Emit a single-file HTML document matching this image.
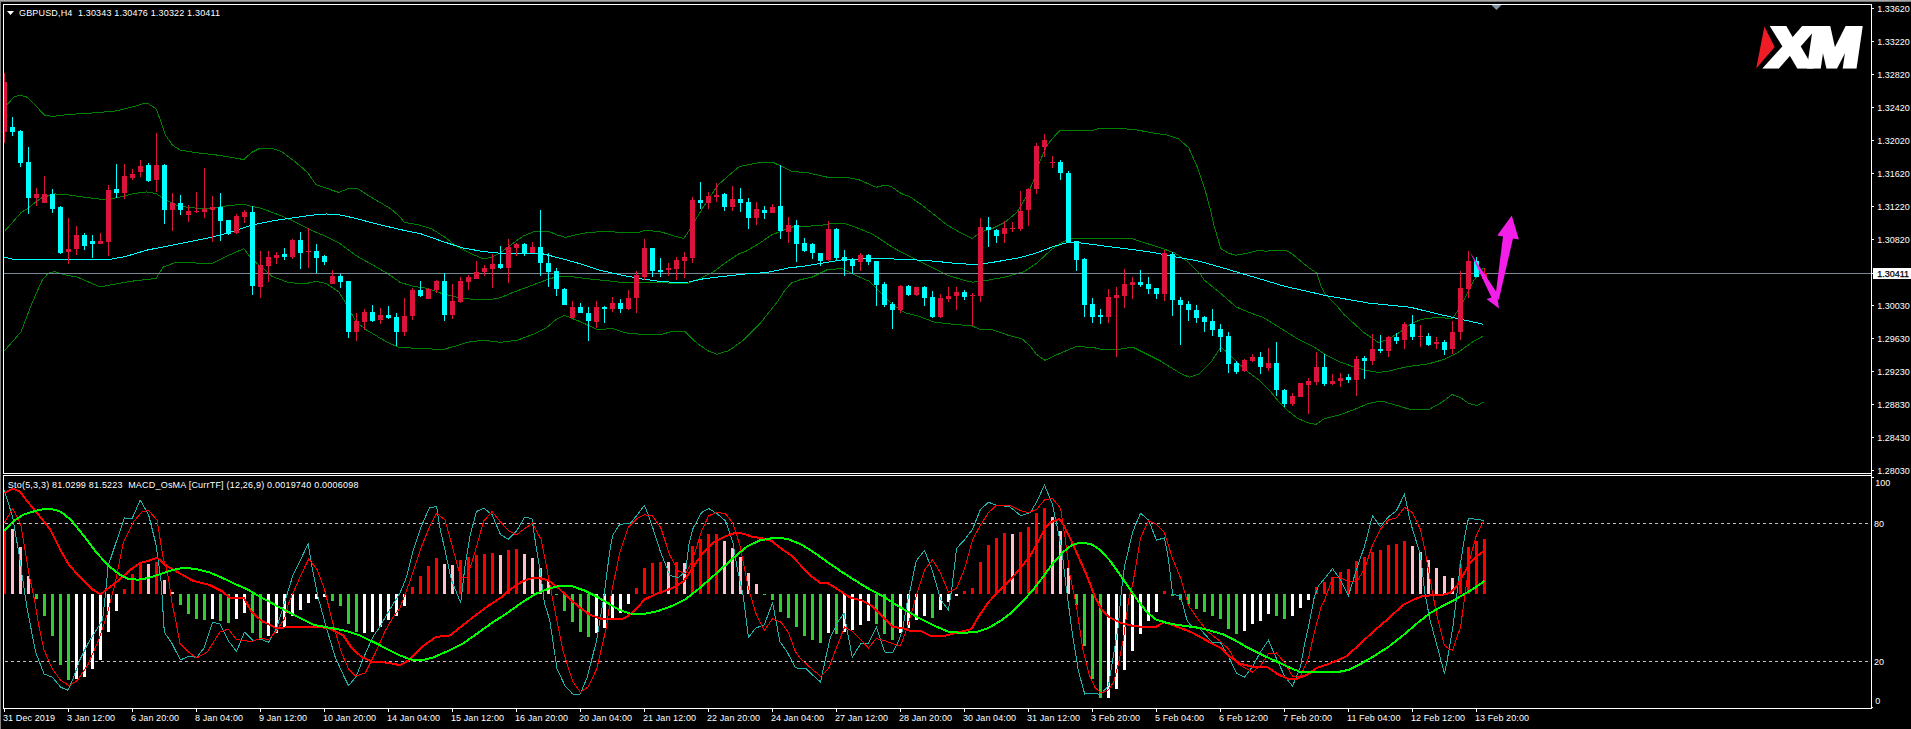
<!DOCTYPE html>
<html><head><meta charset="utf-8"><title>GBPUSD,H4</title>
<style>
html,body{margin:0;padding:0;background:#000}
body{width:1911px;height:729px;overflow:hidden;position:relative}
svg{position:absolute;left:0;top:0;display:block}
text{font-family:"Liberation Sans",sans-serif;font-size:9px;fill:#fff}
</style></head><body>
<svg width="1911" height="729" viewBox="0 0 1911 729">
<rect x="0" y="0" width="1911" height="729" fill="#000"/>
<g fill="none" shape-rendering="crispEdges" stroke-width="1">
<polyline stroke="#008000" points="4.5,108 7.3,104.5 13.6,97.2 20.3,95.1 27.2,97.2 35.6,105.6 44.4,115 52.3,116.5 69,114.4 94.2,112.9 117.2,110.8 134,106.6 142.3,103.9 148.6,103.9 156,108.7 161.2,122.3 165.4,134.9 172.7,145.4 180,150 196.8,152.7 219.8,155.4 243.9,159.6 251.2,152.7 259.5,148.5 272.1,148.5 281.5,151.6 293,160 307.7,172.6 316,184.7 326.5,188.3 339,192.5 348.5,188.3 357.9,188.7 368.4,195.6 381,203 391.4,209.2 400,216.8 404.2,222.3 416.7,224.4 431.4,228.6 446,238 456.5,246.4 471.2,253.7 483.7,259 492.1,256.9 500.5,252.7 513,243.3 523.5,235.9 534,231.7 548.6,231.3 557,234.9 565.4,237.4 575.8,234.9 588.4,232.2 609.3,231.7 626,232.6 637.7,232.7 645,230.2 660.7,231.8 675.4,236.5 683.7,238.4 687.9,232.5 698.4,215 708.8,198.4 718.3,184.8 727.7,176.4 739.2,166.6 750.7,164.3 761.2,162.2 772.7,162.2 782.1,166.6 792.6,171.6 807.2,172.6 828.2,177.4 849.1,177.9 859.5,180 876.3,187.3 884.7,185.2 890.9,186.4 901.4,193.6 909.8,196.7 922.3,205.3 934.9,215.3 947.5,225.3 960.7,232.9 972.2,238.5 981.6,231.6 992.1,228.7 1004.7,222.4 1017.2,212 1027.7,194.2 1034,179.5 1040.2,160.7 1046.5,146 1054.9,135.6 1060.1,130.4 1077.9,130.4 1092.6,130.4 1098.8,128.3 1119.8,128.3 1136.5,129.9 1153.3,133 1167.9,135.2 1178.4,138.7 1188.9,148 1197.2,167 1205.6,192 1211,212 1213.8,225 1218.5,240.7 1220.8,248.5 1227.9,252.9 1235.8,255.3 1246.8,253.3 1259.3,250.1 1265.6,251.4 1273.4,250.1 1285.2,250.1 1292.3,254 1301.7,261.9 1309.5,268.2 1316.6,272.9 1320.5,284.7 1325.2,294.1 1336.2,305.1 1344.1,314.5 1353.5,323.1 1362.9,331.8 1372.3,338.3 1378.8,342.8 1389.3,338.6 1399.8,332.3 1412.3,322.9 1422.8,319.1 1437.5,317.3 1452.1,318.7 1460.5,307.2 1468.8,290.5 1474.1,280 1483.4,268"/>
<polyline stroke="#008000" points="4.5,231.4 21,212.6 28.3,208 35.6,202 41.9,197.7 54.4,193.9 69,195 88,197.7 102.6,199.4 117.2,197.7 134,193.5 146.5,192 156,193.5 165.4,199.8 178,206 194.7,208 211.4,208 226,206 243.9,204 251.2,206.3 261.6,208.4 282.6,216.3 297.2,223 314,231.4 326.5,236.6 339,242.9 355.8,255.5 372.6,264.9 387.2,273.3 400,282.3 412.6,286.2 427.2,288.3 441.9,293.5 458.6,297.7 473.3,299.4 487.9,299.8 500.5,297.7 513,292.4 529.8,286.2 546.5,279.9 559,276 571.6,276.7 588.4,278.8 609.3,280.9 626,283 644.9,282.4 661.6,282 674.2,284 688.9,283 699.3,278.8 714,271.5 726.5,262 739,253.7 746.5,251 759.1,243.4 771.6,235 782.1,230.8 792.6,227 807.2,226.2 819.8,225.6 830.2,223.5 844.9,223.5 859.5,228.7 872.1,234 883.7,241.4 893,247.6 904.7,254 925.6,264.4 946.5,274.9 963.3,280.1 972.7,282.2 988.4,280.1 1005.1,277 1024,271.7 1036.5,263.4 1051.2,249.8 1061.6,242.4 1072.1,238.3 1093,238.7 1114,238.7 1130.7,238.3 1145.4,243 1160,247.7 1174.7,252.9 1187.2,261.3 1200,273.8 1204.1,280 1219.8,292.6 1236.5,307.2 1249.1,312.4 1263.7,317.7 1280.5,328.1 1297.2,338.6 1314,347 1326.5,355.3 1339.1,361.6 1353.7,366.9 1366.3,370.4 1378.8,372.5 1389.3,371 1406,366.9 1429.1,363.7 1443.7,359.5 1458.4,352.2 1473,341.7 1483.5,335.9"/>
<polyline stroke="#008000" points="4.5,350.7 21,331.9 31.4,304.7 41.9,280.6 48.1,273.3 54.4,271.6 67,275.4 77.4,277 90,282.7 100.5,286.9 117.2,283.7 136,280.6 156,278.5 163.3,267 175.8,262.4 192.6,262.8 211.4,263.8 226,256.5 243.9,248.6 251.2,258.6 261.6,267 272.1,276.4 288.9,282.7 305.6,283.7 316,281.2 326.5,283.7 339,292.1 345.4,302.6 355.8,321.4 366.3,329.8 387.2,342.3 400,347.8 420.9,348.2 441.9,349.7 454.4,346.5 467,342.3 483.7,340.2 500.5,342.3 517.2,340.2 534,334 546.5,327.7 554.9,320.4 564.3,315.1 571.6,318.3 582.1,322.4 596.8,329.4 613.5,328.7 626,332.9 642.8,334.4 661.6,334.4 672.1,331.4 684.7,331.4 697.2,343.4 707.7,350.7 717.1,354.3 728.6,350.7 743.3,340.2 760,323.5 776.8,302.6 785.1,290 791.4,283 800,279.8 812.6,277 827.2,269.7 841.9,268.6 852.3,273.8 869.1,281.2 883.7,295.8 892.1,304.2 904.7,312.6 917.2,315.7 934,322 950.7,324 971.6,325.8 980,329.3 992.6,329.9 1009.3,335.6 1021.9,338.7 1030.2,346 1036.5,354.4 1044.9,360.3 1057.5,354.4 1076.3,346.5 1093,347.5 1101.4,349.2 1116,349.8 1132.8,347.1 1145.4,353.4 1160,360.7 1170,367 1180,373 1189.4,377.3 1198.8,374.2 1211.4,361.6 1220.8,347 1230.2,355.3 1236.5,361.6 1247,371 1259.5,380.5 1270,390.9 1278.4,401.4 1286.7,409.8 1297.2,418.1 1307.7,422.8 1316,424.4 1324.4,418.6 1339.1,415 1353.7,409.8 1368.4,403.5 1381,401 1393.5,404.5 1410.2,409.4 1429.1,409.4 1441.6,402.4 1452.1,394.5 1460.5,397.6 1468.8,403.5 1477.2,405.6 1483.5,402.4"/>
</g>
<rect x="4" y="273" width="1867" height="1" fill="#778899" shape-rendering="crispEdges"/>
<polyline fill="none" shape-rendering="crispEdges" stroke="#00FFFF" stroke-width="1" points="4.5,257.1 12.6,259.2 52.3,259.2 111,259.2 125.6,256.5 146.5,250.2 178,244 209.3,237.7 230.2,232.4 251.2,225.1 272.1,220.9 293,217.8 314,215 326.5,214 339,214.7 355.8,218.4 376.8,224 400,229.5 420.9,233.8 441.9,241.2 462.8,248 483.7,251.6 504.7,253.7 525.6,253.7 542.3,253.7 559,257.9 577.9,263.1 598.8,270 619.8,274.7 640.7,278.8 661.6,281.6 676.3,282.4 688.9,282 703.5,278.8 724.4,276.3 745.4,274 766.3,272.6 776.8,270.5 791.4,267.3 800,266.8 820.9,263.4 841.9,259.8 871.2,258.6 904.7,259.2 936,261.3 959,263.8 980,264.4 998.8,261.3 1019.8,257.7 1036.5,252.9 1053.3,246.6 1063.7,243.5 1072.1,242 1093,244.5 1114,247.3 1134.9,249.8 1155.8,252.9 1176.8,257.1 1200,261.3 1230,270 1263.7,280 1284.7,286.3 1326.5,295.7 1368.4,303 1410.2,307.2 1431.2,312.4 1452.1,317.3 1473,321.9 1483.5,324.4"/>
<g shape-rendering="crispEdges">
<rect x="4" y="73" width="1" height="70" fill="#DC143C"/><rect x="2" y="82" width="5" height="50" fill="#DC143C"/>
<rect x="12" y="117" width="1" height="19" fill="#00FFFF"/><rect x="10" y="127" width="5" height="5" fill="#00FFFF"/>
<rect x="20" y="130" width="1" height="37" fill="#00FFFF"/><rect x="18" y="131" width="5" height="32" fill="#00FFFF"/>
<rect x="28" y="147" width="1" height="67" fill="#00FFFF"/><rect x="26" y="162" width="5" height="36" fill="#00FFFF"/>
<rect x="36" y="188" width="1" height="18" fill="#DC143C"/><rect x="34" y="194" width="5" height="4" fill="#DC143C"/>
<rect x="44" y="176" width="1" height="27" fill="#DC143C"/><rect x="42" y="194" width="5" height="9" fill="#DC143C"/>
<rect x="52" y="189" width="1" height="24" fill="#00FFFF"/><rect x="50" y="194" width="5" height="15" fill="#00FFFF"/>
<rect x="60" y="206" width="1" height="48" fill="#00FFFF"/><rect x="58" y="207" width="5" height="46" fill="#00FFFF"/>
<rect x="68" y="218" width="1" height="46" fill="#DC143C"/><rect x="66" y="249" width="5" height="3" fill="#DC143C"/>
<rect x="76" y="226" width="1" height="29" fill="#DC143C"/><rect x="74" y="235" width="5" height="14" fill="#DC143C"/>
<rect x="84" y="233" width="1" height="17" fill="#00FFFF"/><rect x="82" y="235" width="5" height="11" fill="#00FFFF"/>
<rect x="92" y="235" width="1" height="23" fill="#00FFFF"/><rect x="90" y="241" width="5" height="3" fill="#00FFFF"/>
<rect x="100" y="233" width="1" height="11" fill="#DC143C"/><rect x="98" y="241" width="5" height="3" fill="#DC143C"/>
<rect x="108" y="185" width="1" height="71" fill="#DC143C"/><rect x="106" y="190" width="5" height="52" fill="#DC143C"/>
<rect x="116" y="164" width="1" height="34" fill="#00FFFF"/><rect x="114" y="189" width="5" height="4" fill="#00FFFF"/>
<rect x="124" y="164" width="1" height="35" fill="#DC143C"/><rect x="122" y="176" width="5" height="17" fill="#DC143C"/>
<rect x="132" y="169" width="1" height="11" fill="#DC143C"/><rect x="130" y="174" width="5" height="4" fill="#DC143C"/>
<rect x="140" y="160" width="1" height="17" fill="#DC143C"/><rect x="138" y="166" width="5" height="6" fill="#DC143C"/>
<rect x="148" y="163" width="1" height="19" fill="#00FFFF"/><rect x="146" y="165" width="5" height="16" fill="#00FFFF"/>
<rect x="156" y="133" width="1" height="59" fill="#DC143C"/><rect x="154" y="165" width="5" height="15" fill="#DC143C"/>
<rect x="164" y="164" width="1" height="60" fill="#00FFFF"/><rect x="162" y="165" width="5" height="45" fill="#00FFFF"/>
<rect x="172" y="193" width="1" height="38" fill="#DC143C"/><rect x="170" y="203" width="5" height="7" fill="#DC143C"/>
<rect x="180" y="195" width="1" height="20" fill="#00FFFF"/><rect x="178" y="203" width="5" height="7" fill="#00FFFF"/>
<rect x="188" y="205" width="1" height="17" fill="#DC143C"/><rect x="186" y="211" width="5" height="4" fill="#DC143C"/>
<rect x="196" y="192" width="1" height="21" fill="#DC143C"/><rect x="194" y="211" width="5" height="1" fill="#DC143C"/>
<rect x="204" y="168" width="1" height="50" fill="#DC143C"/><rect x="202" y="209" width="5" height="3" fill="#DC143C"/>
<rect x="212" y="196" width="1" height="46" fill="#DC143C"/><rect x="210" y="207" width="5" height="3" fill="#DC143C"/>
<rect x="220" y="193" width="1" height="48" fill="#00FFFF"/><rect x="218" y="207" width="5" height="14" fill="#00FFFF"/>
<rect x="228" y="220" width="1" height="15" fill="#00FFFF"/><rect x="226" y="220" width="5" height="14" fill="#00FFFF"/>
<rect x="236" y="214" width="1" height="20" fill="#DC143C"/><rect x="234" y="216" width="5" height="17" fill="#DC143C"/>
<rect x="244" y="210" width="1" height="13" fill="#DC143C"/><rect x="242" y="212" width="5" height="5" fill="#DC143C"/>
<rect x="252" y="206" width="1" height="89" fill="#00FFFF"/><rect x="250" y="212" width="5" height="74" fill="#00FFFF"/>
<rect x="260" y="251" width="1" height="47" fill="#DC143C"/><rect x="258" y="265" width="5" height="22" fill="#DC143C"/>
<rect x="268" y="251" width="1" height="31" fill="#DC143C"/><rect x="266" y="257" width="5" height="9" fill="#DC143C"/>
<rect x="276" y="252" width="1" height="12" fill="#DC143C"/><rect x="274" y="255" width="5" height="3" fill="#DC143C"/>
<rect x="284" y="248" width="1" height="12" fill="#00FFFF"/><rect x="282" y="254" width="5" height="3" fill="#00FFFF"/>
<rect x="292" y="239" width="1" height="20" fill="#DC143C"/><rect x="290" y="240" width="5" height="17" fill="#DC143C"/>
<rect x="300" y="232" width="1" height="37" fill="#00FFFF"/><rect x="298" y="240" width="5" height="13" fill="#00FFFF"/>
<rect x="308" y="228" width="1" height="40" fill="#DC143C"/><rect x="306" y="251" width="5" height="1" fill="#DC143C"/>
<rect x="316" y="244" width="1" height="29" fill="#00FFFF"/><rect x="314" y="251" width="5" height="7" fill="#00FFFF"/>
<rect x="324" y="255" width="1" height="10" fill="#00FFFF"/><rect x="322" y="256" width="5" height="6" fill="#00FFFF"/>
<rect x="332" y="270" width="1" height="14" fill="#DC143C"/><rect x="330" y="276" width="5" height="8" fill="#DC143C"/>
<rect x="340" y="274" width="1" height="14" fill="#00FFFF"/><rect x="338" y="276" width="5" height="6" fill="#00FFFF"/>
<rect x="348" y="281" width="1" height="57" fill="#00FFFF"/><rect x="346" y="281" width="5" height="51" fill="#00FFFF"/>
<rect x="356" y="313" width="1" height="28" fill="#DC143C"/><rect x="354" y="321" width="5" height="11" fill="#DC143C"/>
<rect x="364" y="309" width="1" height="21" fill="#DC143C"/><rect x="362" y="312" width="5" height="10" fill="#DC143C"/>
<rect x="372" y="305" width="1" height="17" fill="#00FFFF"/><rect x="370" y="312" width="5" height="9" fill="#00FFFF"/>
<rect x="380" y="308" width="1" height="16" fill="#DC143C"/><rect x="378" y="315" width="5" height="5" fill="#DC143C"/>
<rect x="388" y="306" width="1" height="13" fill="#00FFFF"/><rect x="386" y="315" width="5" height="3" fill="#00FFFF"/>
<rect x="396" y="313" width="1" height="33" fill="#00FFFF"/><rect x="394" y="317" width="5" height="15" fill="#00FFFF"/>
<rect x="404" y="298" width="1" height="38" fill="#DC143C"/><rect x="402" y="316" width="5" height="16" fill="#DC143C"/>
<rect x="412" y="288" width="1" height="32" fill="#DC143C"/><rect x="410" y="290" width="5" height="26" fill="#DC143C"/>
<rect x="420" y="281" width="1" height="16" fill="#00FFFF"/><rect x="418" y="290" width="5" height="6" fill="#00FFFF"/>
<rect x="428" y="288" width="1" height="11" fill="#DC143C"/><rect x="426" y="289" width="5" height="10" fill="#DC143C"/>
<rect x="436" y="280" width="1" height="13" fill="#DC143C"/><rect x="434" y="281" width="5" height="9" fill="#DC143C"/>
<rect x="444" y="273" width="1" height="48" fill="#00FFFF"/><rect x="442" y="281" width="5" height="34" fill="#00FFFF"/>
<rect x="452" y="284" width="1" height="35" fill="#DC143C"/><rect x="450" y="301" width="5" height="14" fill="#DC143C"/>
<rect x="460" y="277" width="1" height="26" fill="#DC143C"/><rect x="458" y="281" width="5" height="21" fill="#DC143C"/>
<rect x="468" y="275" width="1" height="15" fill="#DC143C"/><rect x="466" y="277" width="5" height="5" fill="#DC143C"/>
<rect x="476" y="261" width="1" height="18" fill="#DC143C"/><rect x="474" y="272" width="5" height="7" fill="#DC143C"/>
<rect x="484" y="265" width="1" height="11" fill="#DC143C"/><rect x="482" y="268" width="5" height="4" fill="#DC143C"/>
<rect x="492" y="254" width="1" height="34" fill="#DC143C"/><rect x="490" y="264" width="5" height="5" fill="#DC143C"/>
<rect x="500" y="246" width="1" height="23" fill="#00FFFF"/><rect x="498" y="264" width="5" height="4" fill="#00FFFF"/>
<rect x="508" y="239" width="1" height="44" fill="#DC143C"/><rect x="506" y="247" width="5" height="21" fill="#DC143C"/>
<rect x="516" y="243" width="1" height="13" fill="#DC143C"/><rect x="514" y="244" width="5" height="4" fill="#DC143C"/>
<rect x="524" y="243" width="1" height="13" fill="#00FFFF"/><rect x="522" y="244" width="5" height="9" fill="#00FFFF"/>
<rect x="532" y="242" width="1" height="11" fill="#DC143C"/><rect x="530" y="247" width="5" height="6" fill="#DC143C"/>
<rect x="540" y="210" width="1" height="66" fill="#00FFFF"/><rect x="538" y="247" width="5" height="16" fill="#00FFFF"/>
<rect x="548" y="253" width="1" height="34" fill="#00FFFF"/><rect x="546" y="263" width="5" height="9" fill="#00FFFF"/>
<rect x="556" y="268" width="1" height="28" fill="#00FFFF"/><rect x="554" y="271" width="5" height="18" fill="#00FFFF"/>
<rect x="564" y="288" width="1" height="17" fill="#00FFFF"/><rect x="562" y="289" width="5" height="16" fill="#00FFFF"/>
<rect x="572" y="301" width="1" height="17" fill="#DC143C"/><rect x="570" y="307" width="5" height="11" fill="#DC143C"/>
<rect x="580" y="303" width="1" height="10" fill="#00FFFF"/><rect x="578" y="307" width="5" height="6" fill="#00FFFF"/>
<rect x="588" y="307" width="1" height="34" fill="#00FFFF"/><rect x="586" y="313" width="5" height="8" fill="#00FFFF"/>
<rect x="596" y="301" width="1" height="27" fill="#DC143C"/><rect x="594" y="307" width="5" height="15" fill="#DC143C"/>
<rect x="604" y="306" width="1" height="17" fill="#00FFFF"/><rect x="602" y="307" width="5" height="2" fill="#00FFFF"/>
<rect x="612" y="297" width="1" height="15" fill="#DC143C"/><rect x="610" y="303" width="5" height="6" fill="#DC143C"/>
<rect x="620" y="299" width="1" height="14" fill="#00FFFF"/><rect x="618" y="303" width="5" height="6" fill="#00FFFF"/>
<rect x="628" y="290" width="1" height="20" fill="#DC143C"/><rect x="626" y="298" width="5" height="11" fill="#DC143C"/>
<rect x="636" y="271" width="1" height="42" fill="#DC143C"/><rect x="634" y="275" width="5" height="23" fill="#DC143C"/>
<rect x="644" y="239" width="1" height="41" fill="#DC143C"/><rect x="642" y="248" width="5" height="29" fill="#DC143C"/>
<rect x="652" y="248" width="1" height="29" fill="#00FFFF"/><rect x="650" y="248" width="5" height="23" fill="#00FFFF"/>
<rect x="660" y="258" width="1" height="19" fill="#00FFFF"/><rect x="658" y="270" width="5" height="2" fill="#00FFFF"/>
<rect x="668" y="263" width="1" height="13" fill="#DC143C"/><rect x="666" y="268" width="5" height="2" fill="#DC143C"/>
<rect x="676" y="257" width="1" height="23" fill="#DC143C"/><rect x="674" y="260" width="5" height="9" fill="#DC143C"/>
<rect x="684" y="252" width="1" height="26" fill="#DC143C"/><rect x="682" y="257" width="5" height="4" fill="#DC143C"/>
<rect x="692" y="197" width="1" height="66" fill="#DC143C"/><rect x="690" y="200" width="5" height="58" fill="#DC143C"/>
<rect x="700" y="182" width="1" height="27" fill="#00FFFF"/><rect x="698" y="200" width="5" height="3" fill="#00FFFF"/>
<rect x="708" y="192" width="1" height="17" fill="#DC143C"/><rect x="706" y="196" width="5" height="7" fill="#DC143C"/>
<rect x="716" y="183" width="1" height="19" fill="#DC143C"/><rect x="714" y="195" width="5" height="2" fill="#DC143C"/>
<rect x="724" y="193" width="1" height="18" fill="#00FFFF"/><rect x="722" y="194" width="5" height="13" fill="#00FFFF"/>
<rect x="732" y="186" width="1" height="25" fill="#DC143C"/><rect x="730" y="199" width="5" height="8" fill="#DC143C"/>
<rect x="740" y="188" width="1" height="24" fill="#00FFFF"/><rect x="738" y="199" width="5" height="4" fill="#00FFFF"/>
<rect x="748" y="198" width="1" height="31" fill="#00FFFF"/><rect x="746" y="202" width="5" height="16" fill="#00FFFF"/>
<rect x="756" y="202" width="1" height="23" fill="#DC143C"/><rect x="754" y="209" width="5" height="9" fill="#DC143C"/>
<rect x="764" y="206" width="1" height="13" fill="#00FFFF"/><rect x="762" y="210" width="5" height="3" fill="#00FFFF"/>
<rect x="772" y="204" width="1" height="9" fill="#DC143C"/><rect x="770" y="207" width="5" height="6" fill="#DC143C"/>
<rect x="780" y="165" width="1" height="74" fill="#00FFFF"/><rect x="778" y="206" width="5" height="25" fill="#00FFFF"/>
<rect x="788" y="217" width="1" height="26" fill="#DC143C"/><rect x="786" y="225" width="5" height="7" fill="#DC143C"/>
<rect x="796" y="220" width="1" height="42" fill="#00FFFF"/><rect x="794" y="225" width="5" height="19" fill="#00FFFF"/>
<rect x="804" y="238" width="1" height="14" fill="#00FFFF"/><rect x="802" y="243" width="5" height="8" fill="#00FFFF"/>
<rect x="812" y="243" width="1" height="16" fill="#00FFFF"/><rect x="810" y="244" width="5" height="9" fill="#00FFFF"/>
<rect x="820" y="253" width="1" height="13" fill="#00FFFF"/><rect x="818" y="253" width="5" height="8" fill="#00FFFF"/>
<rect x="828" y="221" width="1" height="40" fill="#DC143C"/><rect x="826" y="229" width="5" height="31" fill="#DC143C"/>
<rect x="836" y="228" width="1" height="33" fill="#00FFFF"/><rect x="834" y="229" width="5" height="29" fill="#00FFFF"/>
<rect x="844" y="250" width="1" height="26" fill="#00FFFF"/><rect x="842" y="257" width="5" height="4" fill="#00FFFF"/>
<rect x="852" y="258" width="1" height="16" fill="#00FFFF"/><rect x="850" y="259" width="5" height="7" fill="#00FFFF"/>
<rect x="860" y="253" width="1" height="18" fill="#DC143C"/><rect x="858" y="255" width="5" height="7" fill="#DC143C"/>
<rect x="868" y="254" width="1" height="11" fill="#00FFFF"/><rect x="866" y="255" width="5" height="7" fill="#00FFFF"/>
<rect x="876" y="261" width="1" height="45" fill="#00FFFF"/><rect x="874" y="261" width="5" height="24" fill="#00FFFF"/>
<rect x="884" y="282" width="1" height="25" fill="#00FFFF"/><rect x="882" y="284" width="5" height="21" fill="#00FFFF"/>
<rect x="892" y="302" width="1" height="27" fill="#00FFFF"/><rect x="890" y="304" width="5" height="6" fill="#00FFFF"/>
<rect x="900" y="285" width="1" height="28" fill="#DC143C"/><rect x="898" y="286" width="5" height="24" fill="#DC143C"/>
<rect x="908" y="285" width="1" height="11" fill="#00FFFF"/><rect x="906" y="286" width="5" height="9" fill="#00FFFF"/>
<rect x="916" y="287" width="1" height="9" fill="#DC143C"/><rect x="914" y="287" width="5" height="8" fill="#DC143C"/>
<rect x="924" y="286" width="1" height="20" fill="#00FFFF"/><rect x="922" y="287" width="5" height="11" fill="#00FFFF"/>
<rect x="932" y="291" width="1" height="27" fill="#00FFFF"/><rect x="930" y="297" width="5" height="20" fill="#00FFFF"/>
<rect x="940" y="294" width="1" height="24" fill="#DC143C"/><rect x="938" y="298" width="5" height="19" fill="#DC143C"/>
<rect x="948" y="287" width="1" height="15" fill="#DC143C"/><rect x="946" y="296" width="5" height="3" fill="#DC143C"/>
<rect x="956" y="287" width="1" height="23" fill="#DC143C"/><rect x="954" y="292" width="5" height="4" fill="#DC143C"/>
<rect x="964" y="290" width="1" height="10" fill="#00FFFF"/><rect x="962" y="292" width="5" height="5" fill="#00FFFF"/>
<rect x="972" y="293" width="1" height="33" fill="#DC143C"/><rect x="970" y="295" width="5" height="1" fill="#DC143C"/>
<rect x="980" y="218" width="1" height="84" fill="#DC143C"/><rect x="978" y="227" width="5" height="69" fill="#DC143C"/>
<rect x="988" y="217" width="1" height="30" fill="#00FFFF"/><rect x="986" y="227" width="5" height="3" fill="#00FFFF"/>
<rect x="996" y="229" width="1" height="14" fill="#00FFFF"/><rect x="994" y="230" width="5" height="6" fill="#00FFFF"/>
<rect x="1004" y="221" width="1" height="22" fill="#DC143C"/><rect x="1002" y="228" width="5" height="6" fill="#DC143C"/>
<rect x="1012" y="222" width="1" height="10" fill="#DC143C"/><rect x="1010" y="228" width="5" height="1" fill="#DC143C"/>
<rect x="1020" y="191" width="1" height="40" fill="#DC143C"/><rect x="1018" y="211" width="5" height="18" fill="#DC143C"/>
<rect x="1028" y="188" width="1" height="38" fill="#DC143C"/><rect x="1026" y="189" width="5" height="21" fill="#DC143C"/>
<rect x="1036" y="143" width="1" height="51" fill="#DC143C"/><rect x="1034" y="146" width="5" height="43" fill="#DC143C"/>
<rect x="1044" y="134" width="1" height="23" fill="#DC143C"/><rect x="1042" y="140" width="5" height="7" fill="#DC143C"/>
<rect x="1052" y="156" width="1" height="12" fill="#DC143C"/><rect x="1050" y="162" width="5" height="1" fill="#DC143C"/>
<rect x="1060" y="160" width="1" height="20" fill="#00FFFF"/><rect x="1058" y="162" width="5" height="11" fill="#00FFFF"/>
<rect x="1068" y="171" width="1" height="72" fill="#00FFFF"/><rect x="1066" y="173" width="5" height="69" fill="#00FFFF"/>
<rect x="1076" y="241" width="1" height="30" fill="#00FFFF"/><rect x="1074" y="241" width="5" height="19" fill="#00FFFF"/>
<rect x="1084" y="258" width="1" height="59" fill="#00FFFF"/><rect x="1082" y="259" width="5" height="46" fill="#00FFFF"/>
<rect x="1092" y="298" width="1" height="25" fill="#00FFFF"/><rect x="1090" y="304" width="5" height="13" fill="#00FFFF"/>
<rect x="1100" y="309" width="1" height="15" fill="#00FFFF"/><rect x="1098" y="315" width="5" height="2" fill="#00FFFF"/>
<rect x="1108" y="289" width="1" height="34" fill="#DC143C"/><rect x="1106" y="297" width="5" height="20" fill="#DC143C"/>
<rect x="1116" y="287" width="1" height="70" fill="#DC143C"/><rect x="1114" y="295" width="5" height="3" fill="#DC143C"/>
<rect x="1124" y="269" width="1" height="39" fill="#DC143C"/><rect x="1122" y="284" width="5" height="12" fill="#DC143C"/>
<rect x="1132" y="277" width="1" height="22" fill="#DC143C"/><rect x="1130" y="282" width="5" height="3" fill="#DC143C"/>
<rect x="1140" y="270" width="1" height="17" fill="#00FFFF"/><rect x="1138" y="282" width="5" height="3" fill="#00FFFF"/>
<rect x="1148" y="277" width="1" height="17" fill="#00FFFF"/><rect x="1146" y="284" width="5" height="5" fill="#00FFFF"/>
<rect x="1156" y="288" width="1" height="11" fill="#00FFFF"/><rect x="1154" y="288" width="5" height="6" fill="#00FFFF"/>
<rect x="1164" y="250" width="1" height="51" fill="#DC143C"/><rect x="1162" y="253" width="5" height="41" fill="#DC143C"/>
<rect x="1172" y="252" width="1" height="64" fill="#00FFFF"/><rect x="1170" y="254" width="5" height="46" fill="#00FFFF"/>
<rect x="1180" y="297" width="1" height="48" fill="#00FFFF"/><rect x="1178" y="300" width="5" height="5" fill="#00FFFF"/>
<rect x="1188" y="301" width="1" height="20" fill="#00FFFF"/><rect x="1186" y="304" width="5" height="6" fill="#00FFFF"/>
<rect x="1196" y="305" width="1" height="18" fill="#00FFFF"/><rect x="1194" y="310" width="5" height="8" fill="#00FFFF"/>
<rect x="1204" y="316" width="1" height="16" fill="#00FFFF"/><rect x="1202" y="317" width="5" height="5" fill="#00FFFF"/>
<rect x="1212" y="309" width="1" height="27" fill="#00FFFF"/><rect x="1210" y="321" width="5" height="9" fill="#00FFFF"/>
<rect x="1220" y="324" width="1" height="28" fill="#00FFFF"/><rect x="1218" y="329" width="5" height="8" fill="#00FFFF"/>
<rect x="1228" y="332" width="1" height="41" fill="#00FFFF"/><rect x="1226" y="336" width="5" height="28" fill="#00FFFF"/>
<rect x="1236" y="361" width="1" height="13" fill="#00FFFF"/><rect x="1234" y="363" width="5" height="9" fill="#00FFFF"/>
<rect x="1244" y="359" width="1" height="13" fill="#DC143C"/><rect x="1242" y="360" width="5" height="11" fill="#DC143C"/>
<rect x="1252" y="354" width="1" height="8" fill="#DC143C"/><rect x="1250" y="357" width="5" height="4" fill="#DC143C"/>
<rect x="1260" y="352" width="1" height="22" fill="#00FFFF"/><rect x="1258" y="357" width="5" height="10" fill="#00FFFF"/>
<rect x="1268" y="348" width="1" height="23" fill="#DC143C"/><rect x="1266" y="363" width="5" height="5" fill="#DC143C"/>
<rect x="1276" y="342" width="1" height="54" fill="#00FFFF"/><rect x="1274" y="363" width="5" height="27" fill="#00FFFF"/>
<rect x="1284" y="389" width="1" height="18" fill="#00FFFF"/><rect x="1282" y="390" width="5" height="14" fill="#00FFFF"/>
<rect x="1292" y="393" width="1" height="13" fill="#DC143C"/><rect x="1290" y="396" width="5" height="8" fill="#DC143C"/>
<rect x="1300" y="383" width="1" height="14" fill="#DC143C"/><rect x="1298" y="383" width="5" height="14" fill="#DC143C"/>
<rect x="1308" y="378" width="1" height="36" fill="#DC143C"/><rect x="1306" y="381" width="5" height="4" fill="#DC143C"/>
<rect x="1316" y="352" width="1" height="33" fill="#DC143C"/><rect x="1314" y="367" width="5" height="15" fill="#DC143C"/>
<rect x="1324" y="354" width="1" height="32" fill="#00FFFF"/><rect x="1322" y="367" width="5" height="17" fill="#00FFFF"/>
<rect x="1332" y="374" width="1" height="11" fill="#DC143C"/><rect x="1330" y="381" width="5" height="3" fill="#DC143C"/>
<rect x="1340" y="373" width="1" height="14" fill="#DC143C"/><rect x="1338" y="378" width="5" height="3" fill="#DC143C"/>
<rect x="1348" y="374" width="1" height="9" fill="#00FFFF"/><rect x="1346" y="377" width="5" height="3" fill="#00FFFF"/>
<rect x="1356" y="356" width="1" height="40" fill="#DC143C"/><rect x="1354" y="359" width="5" height="21" fill="#DC143C"/>
<rect x="1364" y="356" width="1" height="23" fill="#00FFFF"/><rect x="1362" y="358" width="5" height="3" fill="#00FFFF"/>
<rect x="1372" y="334" width="1" height="31" fill="#DC143C"/><rect x="1370" y="349" width="5" height="12" fill="#DC143C"/>
<rect x="1380" y="335" width="1" height="18" fill="#00FFFF"/><rect x="1378" y="349" width="5" height="2" fill="#00FFFF"/>
<rect x="1388" y="336" width="1" height="21" fill="#DC143C"/><rect x="1386" y="337" width="5" height="14" fill="#DC143C"/>
<rect x="1396" y="333" width="1" height="11" fill="#00FFFF"/><rect x="1394" y="337" width="5" height="4" fill="#00FFFF"/>
<rect x="1404" y="322" width="1" height="27" fill="#DC143C"/><rect x="1402" y="324" width="5" height="16" fill="#DC143C"/>
<rect x="1412" y="315" width="1" height="25" fill="#00FFFF"/><rect x="1410" y="324" width="5" height="13" fill="#00FFFF"/>
<rect x="1420" y="325" width="1" height="22" fill="#DC143C"/><rect x="1418" y="336" width="5" height="1" fill="#DC143C"/>
<rect x="1428" y="333" width="1" height="13" fill="#00FFFF"/><rect x="1426" y="336" width="5" height="9" fill="#00FFFF"/>
<rect x="1436" y="337" width="1" height="12" fill="#DC143C"/><rect x="1434" y="342" width="5" height="2" fill="#DC143C"/>
<rect x="1444" y="340" width="1" height="15" fill="#00FFFF"/><rect x="1442" y="342" width="5" height="8" fill="#00FFFF"/>
<rect x="1452" y="321" width="1" height="33" fill="#DC143C"/><rect x="1450" y="332" width="5" height="17" fill="#DC143C"/>
<rect x="1460" y="271" width="1" height="69" fill="#DC143C"/><rect x="1458" y="288" width="5" height="44" fill="#DC143C"/>
<rect x="1468" y="251" width="1" height="47" fill="#DC143C"/><rect x="1466" y="261" width="5" height="28" fill="#DC143C"/>
<rect x="1476" y="257" width="1" height="20" fill="#00FFFF"/><rect x="1474" y="261" width="5" height="16" fill="#00FFFF"/>
<rect x="1484" y="268" width="1" height="12" fill="#DC143C"/><rect x="1482" y="273" width="5" height="6" fill="#DC143C"/>
</g>
<g fill="#F31FE8">
<polygon points="1470,252 1497,293 1499,308.5 1486.5,299 1491.5,297.5"/>
<polygon points="1511.8,215.4 1518.9,239.4 1513,238.4 1498.8,300 1495.5,296 1503,236.5 1497.2,235.5"/>
</g>
<polygon points="1491.5,5 1501.5,5 1496.5,10" fill="#8293a8"/>
<g shape-rendering="crispEdges">
<line x1="5" y1="523.5" x2="1871" y2="523.5" stroke="#c0c0c0" stroke-width="1" stroke-dasharray="3 3"/>
<line x1="5" y1="661.5" x2="1871" y2="661.5" stroke="#c0c0c0" stroke-width="1" stroke-dasharray="3 3"/>
<rect x="3" y="530" width="3" height="64" fill="#FF0000"/>
<rect x="11" y="529" width="3" height="65" fill="#FFC0CB"/>
<rect x="19" y="547" width="3" height="47" fill="#FFC0CB"/>
<rect x="27" y="576" width="3" height="18" fill="#FFC0CB"/>
<rect x="35" y="594" width="3" height="5" fill="#32CD32"/>
<rect x="43" y="594" width="3" height="22" fill="#32CD32"/>
<rect x="51" y="594" width="3" height="42" fill="#32CD32"/>
<rect x="59" y="594" width="3" height="71" fill="#32CD32"/>
<rect x="67" y="594" width="3" height="86" fill="#32CD32"/>
<rect x="75" y="594" width="3" height="85" fill="#FFFFFF"/>
<rect x="83" y="594" width="3" height="83" fill="#FFFFFF"/>
<rect x="91" y="594" width="3" height="75" fill="#FFFFFF"/>
<rect x="99" y="594" width="3" height="66" fill="#FFFFFF"/>
<rect x="107" y="594" width="3" height="38" fill="#FFFFFF"/>
<rect x="115" y="594" width="3" height="17" fill="#FFFFFF"/>
<rect x="123" y="589" width="3" height="5" fill="#FF0000"/>
<rect x="131" y="574" width="3" height="20" fill="#FF0000"/>
<rect x="139" y="564" width="3" height="30" fill="#FF0000"/>
<rect x="147" y="564" width="3" height="30" fill="#FFC0CB"/>
<rect x="155" y="562" width="3" height="32" fill="#FF0000"/>
<rect x="163" y="580" width="3" height="14" fill="#FFC0CB"/>
<rect x="171" y="592" width="3" height="2" fill="#FFC0CB"/>
<rect x="179" y="594" width="3" height="11" fill="#32CD32"/>
<rect x="187" y="594" width="3" height="20" fill="#32CD32"/>
<rect x="195" y="594" width="3" height="25" fill="#32CD32"/>
<rect x="203" y="594" width="3" height="26" fill="#32CD32"/>
<rect x="211" y="594" width="3" height="25" fill="#FFFFFF"/>
<rect x="219" y="594" width="3" height="27" fill="#32CD32"/>
<rect x="227" y="594" width="3" height="29" fill="#32CD32"/>
<rect x="235" y="594" width="3" height="25" fill="#FFFFFF"/>
<rect x="243" y="594" width="3" height="19" fill="#FFFFFF"/>
<rect x="251" y="594" width="3" height="39" fill="#32CD32"/>
<rect x="259" y="594" width="3" height="44" fill="#32CD32"/>
<rect x="267" y="594" width="3" height="42" fill="#FFFFFF"/>
<rect x="275" y="594" width="3" height="39" fill="#FFFFFF"/>
<rect x="283" y="594" width="3" height="33" fill="#FFFFFF"/>
<rect x="291" y="594" width="3" height="22" fill="#FFFFFF"/>
<rect x="299" y="594" width="3" height="16" fill="#FFFFFF"/>
<rect x="307" y="594" width="3" height="9" fill="#FFFFFF"/>
<rect x="315" y="594" width="3" height="5" fill="#FFFFFF"/>
<rect x="323" y="594" width="3" height="3" fill="#FFFFFF"/>
<rect x="331" y="594" width="3" height="7" fill="#32CD32"/>
<rect x="339" y="594" width="3" height="12" fill="#32CD32"/>
<rect x="347" y="594" width="3" height="30" fill="#32CD32"/>
<rect x="355" y="594" width="3" height="38" fill="#32CD32"/>
<rect x="363" y="594" width="3" height="39" fill="#FFFFFF"/>
<rect x="371" y="594" width="3" height="38" fill="#FFFFFF"/>
<rect x="379" y="594" width="3" height="33" fill="#FFFFFF"/>
<rect x="387" y="594" width="3" height="26" fill="#FFFFFF"/>
<rect x="395" y="594" width="3" height="22" fill="#FFFFFF"/>
<rect x="403" y="594" width="3" height="12" fill="#FFFFFF"/>
<rect x="411" y="587" width="3" height="7" fill="#FF0000"/>
<rect x="419" y="576" width="3" height="18" fill="#FF0000"/>
<rect x="427" y="566" width="3" height="28" fill="#FF0000"/>
<rect x="435" y="558" width="3" height="36" fill="#FF0000"/>
<rect x="443" y="564" width="3" height="30" fill="#FFC0CB"/>
<rect x="451" y="565" width="3" height="29" fill="#FFC0CB"/>
<rect x="459" y="560" width="3" height="34" fill="#FF0000"/>
<rect x="467" y="557" width="3" height="37" fill="#FF0000"/>
<rect x="475" y="555" width="3" height="39" fill="#FF0000"/>
<rect x="483" y="554" width="3" height="40" fill="#FF0000"/>
<rect x="491" y="553" width="3" height="41" fill="#FF0000"/>
<rect x="499" y="555" width="3" height="39" fill="#FFC0CB"/>
<rect x="507" y="550" width="3" height="44" fill="#FF0000"/>
<rect x="515" y="549" width="3" height="45" fill="#FF0000"/>
<rect x="523" y="554" width="3" height="40" fill="#FFC0CB"/>
<rect x="531" y="558" width="3" height="36" fill="#FFC0CB"/>
<rect x="539" y="568" width="3" height="26" fill="#FFC0CB"/>
<rect x="547" y="581" width="3" height="13" fill="#FFC0CB"/>
<rect x="555" y="594" width="3" height="1" fill="#32CD32"/>
<rect x="563" y="594" width="3" height="17" fill="#32CD32"/>
<rect x="571" y="594" width="3" height="28" fill="#32CD32"/>
<rect x="579" y="594" width="3" height="38" fill="#32CD32"/>
<rect x="587" y="594" width="3" height="43" fill="#32CD32"/>
<rect x="595" y="594" width="3" height="39" fill="#FFFFFF"/>
<rect x="603" y="594" width="3" height="34" fill="#FFFFFF"/>
<rect x="611" y="594" width="3" height="24" fill="#FFFFFF"/>
<rect x="619" y="594" width="3" height="19" fill="#FFFFFF"/>
<rect x="627" y="594" width="3" height="10" fill="#FFFFFF"/>
<rect x="635" y="588" width="3" height="6" fill="#FF0000"/>
<rect x="643" y="568" width="3" height="26" fill="#FF0000"/>
<rect x="651" y="563" width="3" height="31" fill="#FF0000"/>
<rect x="659" y="562" width="3" height="32" fill="#FF0000"/>
<rect x="667" y="562" width="3" height="32" fill="#FFC0CB"/>
<rect x="675" y="562" width="3" height="32" fill="#FF0000"/>
<rect x="683" y="563" width="3" height="31" fill="#FFC0CB"/>
<rect x="691" y="546" width="3" height="48" fill="#FF0000"/>
<rect x="699" y="539" width="3" height="55" fill="#FF0000"/>
<rect x="707" y="534" width="3" height="60" fill="#FF0000"/>
<rect x="715" y="534" width="3" height="60" fill="#FF0000"/>
<rect x="723" y="541" width="3" height="53" fill="#FFC0CB"/>
<rect x="731" y="548" width="3" height="46" fill="#FFC0CB"/>
<rect x="739" y="557" width="3" height="37" fill="#FFC0CB"/>
<rect x="747" y="573" width="3" height="21" fill="#FFC0CB"/>
<rect x="755" y="584" width="3" height="10" fill="#FFC0CB"/>
<rect x="763" y="594" width="3" height="1" fill="#32CD32"/>
<rect x="771" y="594" width="3" height="6" fill="#32CD32"/>
<rect x="779" y="594" width="3" height="18" fill="#32CD32"/>
<rect x="787" y="594" width="3" height="24" fill="#32CD32"/>
<rect x="795" y="594" width="3" height="33" fill="#32CD32"/>
<rect x="803" y="594" width="3" height="42" fill="#32CD32"/>
<rect x="811" y="594" width="3" height="46" fill="#32CD32"/>
<rect x="819" y="594" width="3" height="49" fill="#32CD32"/>
<rect x="827" y="594" width="3" height="39" fill="#FFFFFF"/>
<rect x="835" y="594" width="3" height="40" fill="#32CD32"/>
<rect x="843" y="594" width="3" height="38" fill="#FFFFFF"/>
<rect x="851" y="594" width="3" height="36" fill="#FFFFFF"/>
<rect x="859" y="594" width="3" height="31" fill="#FFFFFF"/>
<rect x="867" y="594" width="3" height="27" fill="#FFFFFF"/>
<rect x="875" y="594" width="3" height="30" fill="#32CD32"/>
<rect x="883" y="594" width="3" height="40" fill="#32CD32"/>
<rect x="891" y="594" width="3" height="46" fill="#32CD32"/>
<rect x="899" y="594" width="3" height="39" fill="#FFFFFF"/>
<rect x="907" y="594" width="3" height="34" fill="#FFFFFF"/>
<rect x="915" y="594" width="3" height="26" fill="#FFFFFF"/>
<rect x="923" y="594" width="3" height="22" fill="#FFFFFF"/>
<rect x="931" y="594" width="3" height="24" fill="#32CD32"/>
<rect x="939" y="594" width="3" height="16" fill="#FFFFFF"/>
<rect x="947" y="594" width="3" height="8" fill="#FFFFFF"/>
<rect x="955" y="594" width="3" height="2" fill="#FFFFFF"/>
<rect x="963" y="591" width="3" height="3" fill="#FF0000"/>
<rect x="971" y="588" width="3" height="6" fill="#FF0000"/>
<rect x="979" y="562" width="3" height="32" fill="#FF0000"/>
<rect x="987" y="545" width="3" height="49" fill="#FF0000"/>
<rect x="995" y="538" width="3" height="56" fill="#FF0000"/>
<rect x="1003" y="533" width="3" height="61" fill="#FF0000"/>
<rect x="1011" y="534" width="3" height="60" fill="#FFC0CB"/>
<rect x="1019" y="532" width="3" height="62" fill="#FF0000"/>
<rect x="1027" y="527" width="3" height="67" fill="#FF0000"/>
<rect x="1035" y="513" width="3" height="81" fill="#FF0000"/>
<rect x="1043" y="508" width="3" height="86" fill="#FF0000"/>
<rect x="1051" y="517" width="3" height="77" fill="#FFC0CB"/>
<rect x="1059" y="531" width="3" height="63" fill="#FFC0CB"/>
<rect x="1067" y="568" width="3" height="26" fill="#FFC0CB"/>
<rect x="1075" y="594" width="3" height="11" fill="#32CD32"/>
<rect x="1083" y="594" width="3" height="52" fill="#32CD32"/>
<rect x="1091" y="594" width="3" height="85" fill="#32CD32"/>
<rect x="1099" y="594" width="3" height="104" fill="#32CD32"/>
<rect x="1107" y="594" width="3" height="104" fill="#FFFFFF"/>
<rect x="1115" y="594" width="3" height="95" fill="#FFFFFF"/>
<rect x="1123" y="594" width="3" height="76" fill="#FFFFFF"/>
<rect x="1131" y="594" width="3" height="57" fill="#FFFFFF"/>
<rect x="1139" y="594" width="3" height="40" fill="#FFFFFF"/>
<rect x="1147" y="594" width="3" height="27" fill="#FFFFFF"/>
<rect x="1155" y="594" width="3" height="18" fill="#FFFFFF"/>
<rect x="1163" y="591" width="3" height="3" fill="#FF0000"/>
<rect x="1171" y="594" width="3" height="2" fill="#32CD32"/>
<rect x="1179" y="594" width="3" height="6" fill="#32CD32"/>
<rect x="1187" y="594" width="3" height="10" fill="#32CD32"/>
<rect x="1195" y="594" width="3" height="15" fill="#32CD32"/>
<rect x="1203" y="594" width="3" height="18" fill="#32CD32"/>
<rect x="1211" y="594" width="3" height="22" fill="#32CD32"/>
<rect x="1219" y="594" width="3" height="25" fill="#32CD32"/>
<rect x="1227" y="594" width="3" height="35" fill="#32CD32"/>
<rect x="1235" y="594" width="3" height="40" fill="#32CD32"/>
<rect x="1243" y="594" width="3" height="37" fill="#FFFFFF"/>
<rect x="1251" y="594" width="3" height="30" fill="#FFFFFF"/>
<rect x="1259" y="594" width="3" height="27" fill="#FFFFFF"/>
<rect x="1267" y="594" width="3" height="20" fill="#FFFFFF"/>
<rect x="1275" y="594" width="3" height="22" fill="#32CD32"/>
<rect x="1283" y="594" width="3" height="25" fill="#32CD32"/>
<rect x="1291" y="594" width="3" height="22" fill="#FFFFFF"/>
<rect x="1299" y="594" width="3" height="14" fill="#FFFFFF"/>
<rect x="1307" y="594" width="3" height="6" fill="#FFFFFF"/>
<rect x="1315" y="587" width="3" height="7" fill="#FF0000"/>
<rect x="1323" y="582" width="3" height="12" fill="#FF0000"/>
<rect x="1331" y="577" width="3" height="17" fill="#FF0000"/>
<rect x="1339" y="572" width="3" height="22" fill="#FF0000"/>
<rect x="1347" y="569" width="3" height="25" fill="#FF0000"/>
<rect x="1355" y="561" width="3" height="33" fill="#FF0000"/>
<rect x="1363" y="557" width="3" height="37" fill="#FF0000"/>
<rect x="1371" y="552" width="3" height="42" fill="#FF0000"/>
<rect x="1379" y="550" width="3" height="44" fill="#FF0000"/>
<rect x="1387" y="545" width="3" height="49" fill="#FF0000"/>
<rect x="1395" y="544" width="3" height="50" fill="#FF0000"/>
<rect x="1403" y="541" width="3" height="53" fill="#FF0000"/>
<rect x="1411" y="546" width="3" height="48" fill="#FFC0CB"/>
<rect x="1419" y="552" width="3" height="42" fill="#FFC0CB"/>
<rect x="1427" y="560" width="3" height="34" fill="#FFC0CB"/>
<rect x="1435" y="568" width="3" height="26" fill="#FFC0CB"/>
<rect x="1443" y="576" width="3" height="18" fill="#FFC0CB"/>
<rect x="1451" y="578" width="3" height="16" fill="#FFC0CB"/>
<rect x="1459" y="564" width="3" height="30" fill="#FF0000"/>
<rect x="1467" y="547" width="3" height="47" fill="#FF0000"/>
<rect x="1475" y="541" width="3" height="53" fill="#FF0000"/>
<rect x="1483" y="539" width="3" height="55" fill="#FF0000"/>
</g>
<g fill="none" shape-rendering="crispEdges">
<polyline stroke="#20B2AA" stroke-width="1" points="4.2,489.7 12.6,516.9 20.9,565 22,574.7 27.2,609 35.6,652 44,674 52.3,677.2 60.7,687.3 68,690.2 73.3,678.3 79.5,660.5 87.9,643.7 96.3,630 102.6,620 106.8,581 107.8,567 116.2,542 124.5,517.9 131.9,519 140.2,500 148.6,514.8 155.9,544 161.2,582 164.3,632.2 171.6,642.7 180.4,660 188.4,656.3 196.8,657.3 204.1,648 212.5,622.4 219.8,623.8 228.2,640.6 236.5,651.5 244.5,632.2 253.3,640.6 260.6,639 268.5,642.3 276.3,629 284.7,602 293,575 300,560.8 308.1,544 311.9,566.3 318.2,597.7 326.5,628 334.9,656.3 343.3,675 348.5,685.6 355.8,677.2 364.2,656.3 372.6,637.4 379.9,626.6 389.3,610.2 400,593 406.3,577.6 412.6,552.4 420.9,527.3 429.3,508 436.6,506.4 439.8,527.3 445,550.3 451.3,579.7 460.7,603 464.9,567 470.1,535.7 476.4,511.6 483.7,508 492.1,514.8 500.5,534.7 508.4,539.3 516.2,531.5 524.5,517.5 531.9,518.3 536,546.2 540.7,573.4 544.4,602.7 549.7,620 557,668.8 565.4,686.6 572.7,694 580,694.4 587.3,677.2 596.8,639.5 604.1,595 609.3,554.5 612.5,535.7 619.8,524.2 630.2,523.6 636.5,515.8 644.5,505.4 649.1,516.9 653.3,529.4 660.6,552.4 670,575.5 678.4,577.6 685.7,571.3 688.9,544 693,528.4 701.4,512.7 708.7,508.5 717.1,513.7 725.5,521 732.8,542 737,567 743.3,596 748.5,637.4 755.8,628 764.2,624.9 772.6,602.8 779.9,641.6 787.2,652 795.6,667.8 800,668.5 806.3,668.8 812.6,675 820.5,682 825.1,660.5 830.4,637.4 837.7,622.2 844,613.2 848.1,635.4 852.3,657.3 860.7,643.7 868.4,643.7 876.4,627 884.6,652 892.5,653 898.4,641.6 902.6,630 906.8,604 908.8,596.4 916.2,560.8 924.5,550.4 932.5,571.3 940.7,599.5 948.4,610 951.8,588.6 956.6,548.3 964.5,539.9 972.5,529.4 980.4,509.5 988.4,502.2 996.8,505.4 1009.3,506.4 1020.8,515.8 1030.2,512.7 1036.5,502.2 1044.5,485 1052.4,504.3 1056.4,523 1061.6,548.3 1065.8,584 1072.1,632 1078.4,671 1084.7,694 1093,693.3 1100.6,694.4 1108.5,685.6 1114,652 1118.2,627 1121.3,591.4 1124.4,567 1132.8,531.5 1140.5,513.3 1148.5,520 1156.5,540.3 1164.4,537.8 1168.4,558.7 1172.6,594.4 1180.5,596 1187.2,621 1191.4,626 1200,629 1212.6,642.7 1220.5,642.7 1228.5,656.3 1236.4,673 1244.6,677.2 1252.5,666.7 1260.5,652 1268.4,640.2 1276.4,658.4 1284.6,676.2 1292.5,686.2 1300.5,666.7 1304.7,643.7 1309.9,620 1314.1,598 1318.3,586 1324.5,578.6 1332.5,568.6 1340.5,579.7 1348.4,595.8 1356.6,569.2 1364.5,546.2 1372.5,515.8 1380.4,526.7 1388.4,516.9 1396.5,510.6 1404.5,494.3 1409.3,516.9 1412.5,529.4 1420.4,554.5 1425,594 1430.2,620.7 1436.5,643.7 1444.5,673.7 1449.1,650 1453.3,624 1456.4,598.5 1460.6,562.9 1464.8,535.7 1468.5,518.3 1476.5,519.4 1483.6,520.4"/>
<polyline stroke="#FF0000" stroke-width="1" points="4.2,523 12.6,508.5 20.9,525 29.3,575.5 34.5,599.8 38.7,625 44,650 52.3,668.8 60.7,680.4 69,685.6 77.4,680.4 87.9,664.7 98.4,640.6 106.8,615.5 113,591.4 115,583.8 123.5,542 134,521 142.3,511.6 148.6,510.6 157,520 163.3,558.7 167.5,572 172,603 176,622 180,643.7 188.4,652 196.8,658 207.2,652 219.8,632.2 228.2,629 236.5,639.5 251.2,641.6 260.6,638.5 268.5,639.5 276.3,631.2 284.7,618.6 288,605 293,593 301.4,574 308.7,559 317.1,569.5 324.4,589 332.8,622.8 341.2,652 348.5,668.8 355.8,676.2 365.3,673 374.7,654.2 385.1,631.2 393.5,616.5 400,608 410.5,579.7 420.9,548.3 429.3,527.3 436.6,513.3 445,520 452.3,546.2 460.7,577.6 467,577.6 474.3,554.5 483.7,521 492.1,511.6 500.5,522 508.4,530.5 516.2,535 524.5,528.8 532.5,523.1 541.3,539.9 548.6,577.6 553.8,605 563.3,652 572.7,681.4 580.4,692.3 588.4,686.6 596.8,668.8 606.2,628 611.4,593 619.8,552.4 628.2,527.3 636.5,519 644.5,514.8 652.2,515.8 660.6,527.3 670,555.6 678.4,571.3 685.7,573.4 693,558.7 701.4,531.5 708.7,515.8 717.1,512.3 725.5,513.7 732.8,523 740.1,546.2 748.5,588.5 755.8,613.2 764.2,630.7 772.6,618.5 781,622.2 788.3,632.2 795.6,652 800,658 810.5,667.8 820.5,676.2 828.5,668.8 836.4,647.9 844.6,627 852.5,631.2 860.5,639.5 868.4,647.9 876.4,638.5 884.6,640.6 892.5,643.7 900.5,645.8 906.8,629 913,608 917.2,592.2 924.5,570.2 932.5,559.8 940.7,573.4 948.4,592.2 956.6,588 964.5,569.2 972.5,539.9 980.4,525.2 988.4,512.7 996.8,505 1009.3,505.4 1020.8,510.6 1028.2,512.7 1036.5,509.5 1044.5,500 1052.4,498.4 1060.6,508.5 1064.8,535.7 1070,575.5 1076.3,605 1082.6,647.9 1088.9,674 1095.1,687.7 1101.4,693 1108.5,689.8 1114,681.4 1118.2,664.7 1123.4,639.5 1128.6,600 1132.8,583.8 1140.5,537.8 1148.5,521 1156.5,524.2 1164.4,532.6 1172.6,558.7 1180.5,577.6 1188.5,605.5 1196.7,617.5 1200,622 1208.4,632.2 1220.5,641.6 1228.5,649 1236.4,662.6 1244.6,667.8 1252.5,672 1260.5,665.7 1268.4,653.6 1276.4,653 1284.6,662.6 1292.5,676.2 1300.5,676.2 1308.4,658.4 1314.1,633.3 1321.4,606 1324.5,600.6 1332.5,577.6 1340.5,577.6 1348.4,581.7 1356.6,581.7 1364.5,569.2 1372.5,545 1380.4,529.4 1388.4,520 1396.5,517.9 1404.5,507.4 1412.5,512.7 1420.4,529.4 1425,550.4 1430.2,580 1436.5,614 1444.5,645.8 1452.4,650.4 1460.6,627 1464.8,596 1470,558.7 1476.5,534.7 1483.6,520.6"/>
<polyline stroke="#FF0000" stroke-width="2" stroke-linejoin="round" points="4.2,492.8 12.6,488.6 19.9,491.7 27.2,501.2 37.7,513.7 50.2,529.4 60.7,550.4 69,565 79.5,576.5 92.1,589.1 100.5,594.3 108.8,588 119.3,579.7 129.8,570.2 140.2,562.9 148.6,560.8 157,557.7 165.4,565 178,572.3 192.6,580.7 209.3,584.9 221.9,591.2 230.2,597.7 243.9,598 251.2,611.2 261.6,621 276.3,628 293,627 314,626.6 328.6,628 343.3,635.4 351.6,647.9 362.1,657.3 372.6,661.9 387.2,662.6 400,665.2 408.4,660.5 420.9,647.9 435.6,637 450.2,635.4 460.7,627 473.3,617 487.9,606 500.5,598 510.9,589 521.4,582 529.8,578.6 538.1,578 548.6,580.3 559,588.6 569.5,598.5 580,607.9 590.5,615 600.9,618.7 611.4,619.4 624,618.4 632.3,613 644.9,599.3 657.5,593.4 672.1,588.2 683.6,581.4 693,567 703.5,552.4 714,542 724.4,536.7 734.9,533 743.3,533.6 751.6,536.7 762.1,538.2 771.5,540.9 781,548.3 791.4,555.6 800,564.5 810.5,575.6 819.9,582.7 827.2,582.7 837.7,589.2 850.2,597.5 862.8,600.7 873.3,607 883.7,617.4 893.1,627.2 902.6,628 910.9,631.2 921.4,631.2 931.9,636.4 942.3,636.4 954.9,633.3 963.3,631.2 971.6,629 977.9,617.6 988.4,602.3 998.8,591.2 1009.3,580.7 1019.8,569.2 1030.2,555.6 1038.6,540.9 1044.9,528.4 1051.2,522 1059.5,519 1063.7,525.2 1070,537.8 1078.4,556.6 1086.8,575.5 1095.1,597 1101.4,609 1109.8,617.5 1120.2,622.7 1130.7,625.4 1143.3,627 1155.8,627 1164.2,622.2 1172.6,624.9 1183,629 1191.4,632.2 1200,636.9 1210.5,642.7 1220.9,647.9 1229.3,656.3 1239.8,663.6 1252.3,666.7 1267,666.7 1277.4,674 1287.9,678.9 1296.3,678.9 1306.7,675 1317.2,667.8 1329.8,663.6 1346.5,656.3 1359.1,644.8 1373.7,631.2 1388.4,618.6 1403,605 1413.5,599.8 1421.9,596.4 1430.2,595.4 1442.8,595 1451.2,592.3 1457.5,585 1463.7,574 1470,563 1476.3,556.6 1484.5,550.8"/>
<polyline stroke="#00FF00" stroke-width="2" stroke-linejoin="round" points="4.2,530.5 12.6,522 23,514.8 37.7,510.2 49.2,508.5 60.7,511.6 71.2,520 83.7,535.7 96.3,552.4 108.8,566 119.3,574.4 127.7,578.6 138.1,579.7 148.6,578 159,574.4 171.6,570.2 184.2,567.7 196.8,569.2 209.3,572.3 221.9,577.6 234.4,583.8 247,589.1 259.5,596.5 272.1,603.3 284.7,610 293,614.4 314,624.9 330.7,628 345.4,630.7 360,635.4 374.7,642.7 387.2,649 400,655.5 410.5,659.4 420.9,660.5 433.5,657.3 448.1,651 462.8,643.7 477.5,633.3 492.1,622.8 506.7,613.4 521.4,602.9 536,593.7 548.6,588.6 559,586.1 571.6,586.1 584.2,590.4 596.8,596.6 609.3,604 619.8,610.2 630.2,613.5 644.9,613.8 657.5,611.2 672.1,606 684.7,599.7 697.2,590.2 709.8,579.2 722.3,568 734.9,556.6 747.5,546.2 760,540.3 774.7,537.8 787.2,538.8 800,543.8 812.6,551.4 827.2,561.9 841.9,572 856.5,581.3 871.2,590.2 883.7,596.5 896.3,604.9 908.8,612.2 921.4,619.3 936,626.5 948.6,631.8 961.2,632.8 975.8,632.2 988.4,628 1000.9,620.6 1011.4,612.6 1021.9,602.3 1032.3,590.8 1042.8,577.2 1053.3,563 1063.7,551.4 1072.1,545 1080.5,542.6 1090.9,544 1099.3,549.3 1109.8,560.4 1120.2,575 1130.7,590.2 1139.1,602.3 1147.5,612.6 1155.8,619.5 1166.3,622.7 1176.8,624.8 1187.2,626.2 1200,628 1210.5,630.7 1223,634.3 1235.6,640.6 1248.1,647.9 1262.8,655.2 1277.4,661.9 1290,667.8 1300.5,672 1317.2,672 1338.1,672 1348.6,669.9 1361.2,663.6 1373.7,656.3 1388.4,646.9 1403,635.4 1417.7,622.8 1430.2,613 1442.8,605.9 1453.3,600.7 1463.7,594.4 1474.2,588.2 1484.5,581"/>
</g>
<g shape-rendering="crispEdges">
<rect x="0" y="0" width="3" height="729" fill="#000"/>
<rect x="0" y="0" width="1911" height="1" fill="#a9a9a9"/>
<rect x="0" y="1" width="1911" height="1" fill="#7a7a7a"/>
<rect x="0" y="1" width="1" height="728" fill="#808080"/>
<rect x="3" y="4" width="1869" height="1" fill="#fff"/>
<rect x="3" y="4" width="1" height="470" fill="#fff"/>
<rect x="3" y="473" width="1869" height="1" fill="#fff"/>
<rect x="1871" y="4" width="1" height="705" fill="#fff"/>
<rect x="3" y="475" width="1869" height="1" fill="#fff"/>
<rect x="3" y="475" width="1" height="234" fill="#fff"/>
<rect x="3" y="708" width="1869" height="1" fill="#fff"/>
<rect x="1872" y="8" width="2" height="1" fill="#fff"/>
<rect x="1872" y="41" width="2" height="1" fill="#fff"/>
<rect x="1872" y="74" width="2" height="1" fill="#fff"/>
<rect x="1872" y="107" width="2" height="1" fill="#fff"/>
<rect x="1872" y="140" width="2" height="1" fill="#fff"/>
<rect x="1872" y="173" width="2" height="1" fill="#fff"/>
<rect x="1872" y="206" width="2" height="1" fill="#fff"/>
<rect x="1872" y="239" width="2" height="1" fill="#fff"/>
<rect x="1872" y="305" width="2" height="1" fill="#fff"/>
<rect x="1872" y="338" width="2" height="1" fill="#fff"/>
<rect x="1872" y="371" width="2" height="1" fill="#fff"/>
<rect x="1872" y="404" width="2" height="1" fill="#fff"/>
<rect x="1872" y="437" width="2" height="1" fill="#fff"/>
<rect x="1872" y="470" width="2" height="1" fill="#fff"/>
<rect x="1872" y="477" width="2" height="1" fill="#fff"/>
<rect x="1872" y="707" width="1" height="1" fill="#fff"/>
<rect x="4" y="709" width="1" height="3" fill="#fff"/>
<rect x="68" y="709" width="1" height="3" fill="#fff"/>
<rect x="132" y="709" width="1" height="3" fill="#fff"/>
<rect x="196" y="709" width="1" height="3" fill="#fff"/>
<rect x="260" y="709" width="1" height="3" fill="#fff"/>
<rect x="324" y="709" width="1" height="3" fill="#fff"/>
<rect x="388" y="709" width="1" height="3" fill="#fff"/>
<rect x="452" y="709" width="1" height="3" fill="#fff"/>
<rect x="516" y="709" width="1" height="3" fill="#fff"/>
<rect x="580" y="709" width="1" height="3" fill="#fff"/>
<rect x="644" y="709" width="1" height="3" fill="#fff"/>
<rect x="708" y="709" width="1" height="3" fill="#fff"/>
<rect x="772" y="709" width="1" height="3" fill="#fff"/>
<rect x="836" y="709" width="1" height="3" fill="#fff"/>
<rect x="900" y="709" width="1" height="3" fill="#fff"/>
<rect x="964" y="709" width="1" height="3" fill="#fff"/>
<rect x="1028" y="709" width="1" height="3" fill="#fff"/>
<rect x="1092" y="709" width="1" height="3" fill="#fff"/>
<rect x="1156" y="709" width="1" height="3" fill="#fff"/>
<rect x="1220" y="709" width="1" height="3" fill="#fff"/>
<rect x="1284" y="709" width="1" height="3" fill="#fff"/>
<rect x="1348" y="709" width="1" height="3" fill="#fff"/>
<rect x="1412" y="709" width="1" height="3" fill="#fff"/>
<rect x="1476" y="709" width="1" height="3" fill="#fff"/>
<rect x="1873" y="268" width="38" height="11" fill="#fff"/>
<rect x="1872" y="273" width="2" height="1" fill="#fff"/>
</g>
<text x="1877.2" y="11.8">1.33620</text>
<text x="1877.2" y="44.8">1.33220</text>
<text x="1877.2" y="77.8">1.32820</text>
<text x="1877.2" y="110.8">1.32420</text>
<text x="1877.2" y="143.8">1.32020</text>
<text x="1877.2" y="176.8">1.31620</text>
<text x="1877.2" y="209.8">1.31220</text>
<text x="1877.2" y="242.8">1.30820</text>
<text x="1877.2" y="308.8">1.30030</text>
<text x="1877.2" y="341.8">1.29630</text>
<text x="1877.2" y="374.8">1.29230</text>
<text x="1877.2" y="407.8">1.28830</text>
<text x="1877.2" y="440.8">1.28430</text>
<text x="1877.2" y="473.8">1.28030</text>
<text x="1877.2" y="276.7" style="fill:#000;stroke:#000;stroke-width:0.25px">1.30411</text>
<text x="1875.3" y="485.6">100</text>
<text x="1874" y="526.6">80</text>
<text x="1874" y="664.6">20</text>
<text x="1875.3" y="704.4">0</text>
<polygon points="7,11 14,11 10.5,15" fill="#fff"/>
<text x="19" y="16" xml:space="preserve" textLength="201" lengthAdjust="spacing">GBPUSD,H4  1.30343 1.30476 1.30322 1.30411</text>
<text x="7.8" y="488" xml:space="preserve" textLength="350.6" lengthAdjust="spacing">Sto(5,3,3) 81.0299 81.5223  MACD_OsMA [CurrTF] (12,26,9) 0.0019740 0.0006098</text>
<text x="3" y="720.8" textLength="52.0" lengthAdjust="spacing">31 Dec 2019</text>
<text x="67" y="720.8" textLength="48.0" lengthAdjust="spacing">3 Jan 12:00</text>
<text x="131" y="720.8" textLength="48.0" lengthAdjust="spacing">6 Jan 20:00</text>
<text x="195" y="720.8" textLength="48.0" lengthAdjust="spacing">8 Jan 04:00</text>
<text x="259" y="720.8" textLength="48.0" lengthAdjust="spacing">9 Jan 12:00</text>
<text x="323" y="720.8" textLength="53.0" lengthAdjust="spacing">10 Jan 20:00</text>
<text x="387" y="720.8" textLength="53.0" lengthAdjust="spacing">14 Jan 04:00</text>
<text x="451" y="720.8" textLength="53.0" lengthAdjust="spacing">15 Jan 12:00</text>
<text x="515" y="720.8" textLength="53.0" lengthAdjust="spacing">16 Jan 20:00</text>
<text x="579" y="720.8" textLength="53.0" lengthAdjust="spacing">20 Jan 04:00</text>
<text x="643" y="720.8" textLength="53.0" lengthAdjust="spacing">21 Jan 12:00</text>
<text x="707" y="720.8" textLength="53.0" lengthAdjust="spacing">22 Jan 20:00</text>
<text x="771" y="720.8" textLength="53.0" lengthAdjust="spacing">24 Jan 04:00</text>
<text x="835" y="720.8" textLength="53.0" lengthAdjust="spacing">27 Jan 12:00</text>
<text x="899" y="720.8" textLength="53.0" lengthAdjust="spacing">28 Jan 20:00</text>
<text x="963" y="720.8" textLength="53.0" lengthAdjust="spacing">30 Jan 04:00</text>
<text x="1027" y="720.8" textLength="53.0" lengthAdjust="spacing">31 Jan 12:00</text>
<text x="1091" y="720.8" textLength="49.0" lengthAdjust="spacing">3 Feb 20:00</text>
<text x="1155" y="720.8" textLength="49.0" lengthAdjust="spacing">5 Feb 04:00</text>
<text x="1219" y="720.8" textLength="49.0" lengthAdjust="spacing">6 Feb 12:00</text>
<text x="1283" y="720.8" textLength="49.0" lengthAdjust="spacing">7 Feb 20:00</text>
<text x="1347" y="720.8" textLength="53.4" lengthAdjust="spacing">11 Feb 04:00</text>
<text x="1411" y="720.8" textLength="54.0" lengthAdjust="spacing">12 Feb 12:00</text>
<text x="1475" y="720.8" textLength="54.0" lengthAdjust="spacing">13 Feb 20:00</text>
<polygon points="1764.4,26.6 1774.7,47.1 1756.2,68.5" fill="#EE1C25"/>
<text transform="translate(1767.6,66.4) skewX(-8.3) scale(1.15,1)" style="font-size:54.5px;font-weight:bold;fill:#fff;stroke:#fff;stroke-width:5px;stroke-linejoin:miter;letter-spacing:-3px">XM</text>
</svg>
</body></html>
